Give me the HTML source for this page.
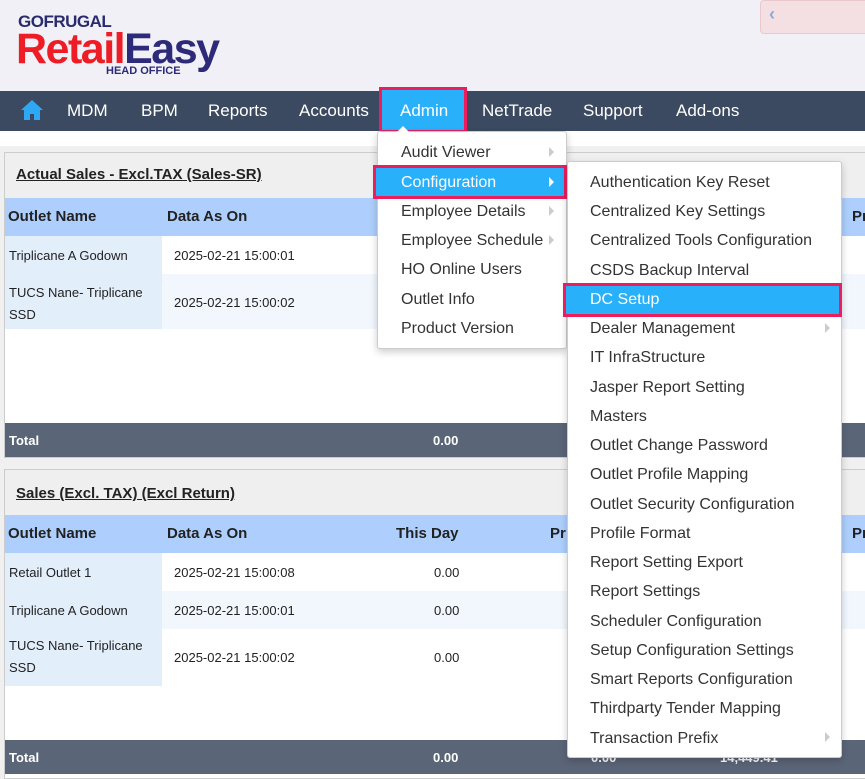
<!DOCTYPE html>
<html><head><meta charset="utf-8"><style>
*{box-sizing:border-box;margin:0;padding:0}
body{width:865px;height:772px;overflow:hidden;background:#f0f0f0;font-family:"Liberation Sans",sans-serif;position:relative;color:#222}
.hdr{position:absolute;left:0;top:0;width:865px;height:91px;background:#f0f0f6}
.nav{position:absolute;left:0;top:91px;width:865px;height:40px;background:#3b4a60}
.nav span{position:absolute;top:10px;color:#fff;font-size:17px}
.strip{position:absolute;left:0;top:131px;width:865px;height:15px;background:#fff}
.panel{position:absolute;left:4px;width:870px;border:1px solid #ccc;background:#fff}
.ptitle{height:45px;background:#efefef;padding:13px 11px;font-weight:bold;font-size:15px;text-decoration:underline}
.thead{height:38px;background:#aecffd;position:relative;font-weight:bold;font-size:15px}
.thead span,.row span{position:absolute}
.row{position:relative;font-size:13px}
.total{position:absolute;left:0;width:870px;height:34px;background:#5b6578;color:#fff;font-weight:bold;font-size:13px}
.total span{position:absolute;top:10px}
.menu{position:absolute;background:#fff;border:1px solid #ccc;border-radius:3px;box-shadow:0 3px 8px rgba(0,0,0,.2)}
.mi{position:absolute;font-size:16px;color:#333;white-space:nowrap;margin-top:1px}
.hl{position:absolute;background:#29b0fb;border:3px solid #ee1c5a}
.arr{position:absolute;width:0;height:0;border-left:5px solid #ccc;border-top:5px solid transparent;border-bottom:5px solid transparent}
</style></head><body>
<div class="hdr">
 <div style="position:absolute;left:18px;top:12px;font-size:17px;font-weight:bold;color:#2a2a6e;letter-spacing:-0.5px">GOFRUGAL</div>
 <div style="position:absolute;left:16px;top:26px;font-size:43px;font-weight:bold;letter-spacing:-1.5px;line-height:46px"><span style="color:#ee1c25">Retail</span><span style="color:#2e2a7a">Easy</span></div>
 <div style="position:absolute;left:106px;top:65px;font-size:11px;font-weight:bold;color:#2e2a7a">HEAD OFFICE</div>
 <div style="position:absolute;left:760px;top:0;width:110px;height:34px;background:#f4e0e2;border:1px solid #eac8cc;border-radius:4px"><span style="position:absolute;left:8px;top:3px;color:#8aa8d8;font-size:18px;font-weight:bold">‹</span></div>
</div>
<div class="nav">
 <svg style="position:absolute;left:20px;top:8px" width="24" height="22" viewBox="0 0 24 22"><path d="M12 1 L1 11 H4 V21 H10 V15 H14 V21 H20 V11 H23 Z" fill="#2ea8f5"/></svg>
 <span style="left:67px">MDM</span><span style="left:141px">BPM</span><span style="left:208px">Reports</span><span style="left:299px">Accounts</span>
 <span style="left:482px">NetTrade</span><span style="left:583px">Support</span><span style="left:676px">Add-ons</span>
</div>
<div class="hl" style="left:379px;top:87px;width:88px;height:46px"></div>
<span style="position:absolute;left:400px;top:101px;color:#fff;font-size:17px">Admin</span>
<div class="strip"></div>

<div class="panel" style="top:152px;height:306px">
 <div class="ptitle">Actual Sales - Excl.TAX (Sales-SR)</div>
 <div class="thead"><span style="left:3px;top:10px">Outlet Name</span><span style="left:162px;top:10px">Data As On</span><span style="left:847px;top:10px">Pr</span></div>
 <div class="row" style="height:38px;background:#fff"><div style="position:absolute;left:0;top:0;width:157px;height:38px;background:#e3eefb"></div><span style="left:4px;top:12px">Triplicane A Godown</span><span style="left:169px;top:12px">2025-02-21 15:00:01</span></div>
 <div class="row" style="height:55px;background:#f2f7fe"><div style="position:absolute;left:0;top:0;width:157px;height:55px;background:#e3eefb"></div><span style="left:4px;top:8px;line-height:22px">TUCS Nane- Triplicane<br>SSD</span><span style="left:169px;top:21px">2025-02-21 15:00:02</span></div>
 <div class="total" style="top:270px"><span style="left:4px">Total</span><span style="left:428px">0.00</span></div>
</div>

<div class="panel" style="top:469px;height:310px">
 <div class="ptitle" style="padding-top:15px">Sales (Excl. TAX) (Excl Return)</div>
 <div class="thead"><span style="left:3px;top:10px">Outlet Name</span><span style="left:162px;top:10px">Data As On</span><span style="left:391px;top:10px">This Day</span><span style="left:545px;top:10px">Pr</span><span style="left:847px;top:10px">Pr</span></div>
 <div class="row" style="height:38px;background:#fff"><div style="position:absolute;left:0;top:0;width:157px;height:38px;background:#e3eefb"></div><span style="left:4px;top:12px">Retail Outlet 1</span><span style="left:169px;top:12px">2025-02-21 15:00:08</span><span style="left:429px;top:12px">0.00</span></div>
 <div class="row" style="height:38px;background:#f2f7fe"><div style="position:absolute;left:0;top:0;width:157px;height:38px;background:#e3eefb"></div><span style="left:4px;top:12px">Triplicane A Godown</span><span style="left:169px;top:12px">2025-02-21 15:00:01</span><span style="left:429px;top:12px">0.00</span></div>
 <div class="row" style="height:57px;background:#fff"><div style="position:absolute;left:0;top:0;width:157px;height:57px;background:#e3eefb"></div><span style="left:4px;top:6px;line-height:22px">TUCS Nane- Triplicane<br>SSD</span><span style="left:169px;top:21px">2025-02-21 15:00:02</span><span style="left:429px;top:21px">0.00</span></div>
 <div class="total" style="top:270px"><span style="left:4px">Total</span><span style="left:428px">0.00</span><span style="left:586px">0.00</span><span style="left:715px">14,449.41</span></div>
</div>

<div class="menu" style="left:377px;top:131px;width:190px;height:218px"></div>
<div style="position:absolute;left:397px;top:126px;width:0;height:0;border-left:6px solid transparent;border-right:6px solid transparent;border-bottom:6px solid #fff"></div>
<div class="hl" style="left:373px;top:165px;width:194px;height:34px"></div>
<div class="mi" style="left:401px;top:143px">Audit Viewer</div>
<div class="mi" style="left:401px;top:173px;color:#fff">Configuration</div>
<div class="mi" style="left:401px;top:202px">Employee Details</div>
<div class="mi" style="left:401px;top:231px">Employee Schedule</div>
<div class="mi" style="left:401px;top:260px">HO Online Users</div>
<div class="mi" style="left:401px;top:290px">Outlet Info</div>
<div class="mi" style="left:401px;top:319px">Product Version</div>
<div class="arr" style="left:549px;top:147px"></div>
<div class="arr" style="left:549px;top:177px;border-left-color:#fff"></div>
<div class="arr" style="left:549px;top:206px"></div>
<div class="arr" style="left:549px;top:235px"></div>

<div class="menu" style="left:567px;top:161px;width:275px;height:597px"></div>
<div class="hl" style="left:563px;top:283px;width:279px;height:34px"></div>
<div class="mi" style="left:590px;top:173px">Authentication Key Reset</div>
<div class="mi" style="left:590px;top:202px">Centralized Key Settings</div>
<div class="mi" style="left:590px;top:231px">Centralized Tools Configuration</div>
<div class="mi" style="left:590px;top:261px">CSDS Backup Interval</div>
<div class="mi" style="left:590px;top:290px;color:#fff">DC Setup</div>
<div class="mi" style="left:590px;top:319px">Dealer Management</div>
<div class="mi" style="left:590px;top:348px">IT InfraStructure</div>
<div class="mi" style="left:590px;top:378px">Jasper Report Setting</div>
<div class="mi" style="left:590px;top:407px">Masters</div>
<div class="mi" style="left:590px;top:436px">Outlet Change Password</div>
<div class="mi" style="left:590px;top:465px">Outlet Profile Mapping</div>
<div class="mi" style="left:590px;top:495px">Outlet Security Configuration</div>
<div class="mi" style="left:590px;top:524px">Profile Format</div>
<div class="mi" style="left:590px;top:553px">Report Setting Export</div>
<div class="mi" style="left:590px;top:582px">Report Settings</div>
<div class="mi" style="left:590px;top:612px">Scheduler Configuration</div>
<div class="mi" style="left:590px;top:641px">Setup Configuration Settings</div>
<div class="mi" style="left:590px;top:670px">Smart Reports Configuration</div>
<div class="mi" style="left:590px;top:699px">Thirdparty Tender Mapping</div>
<div class="mi" style="left:590px;top:729px">Transaction Prefix</div>
<div class="arr" style="left:825px;top:323px"></div>
<div class="arr" style="left:825px;top:732px"></div>
</body></html>
